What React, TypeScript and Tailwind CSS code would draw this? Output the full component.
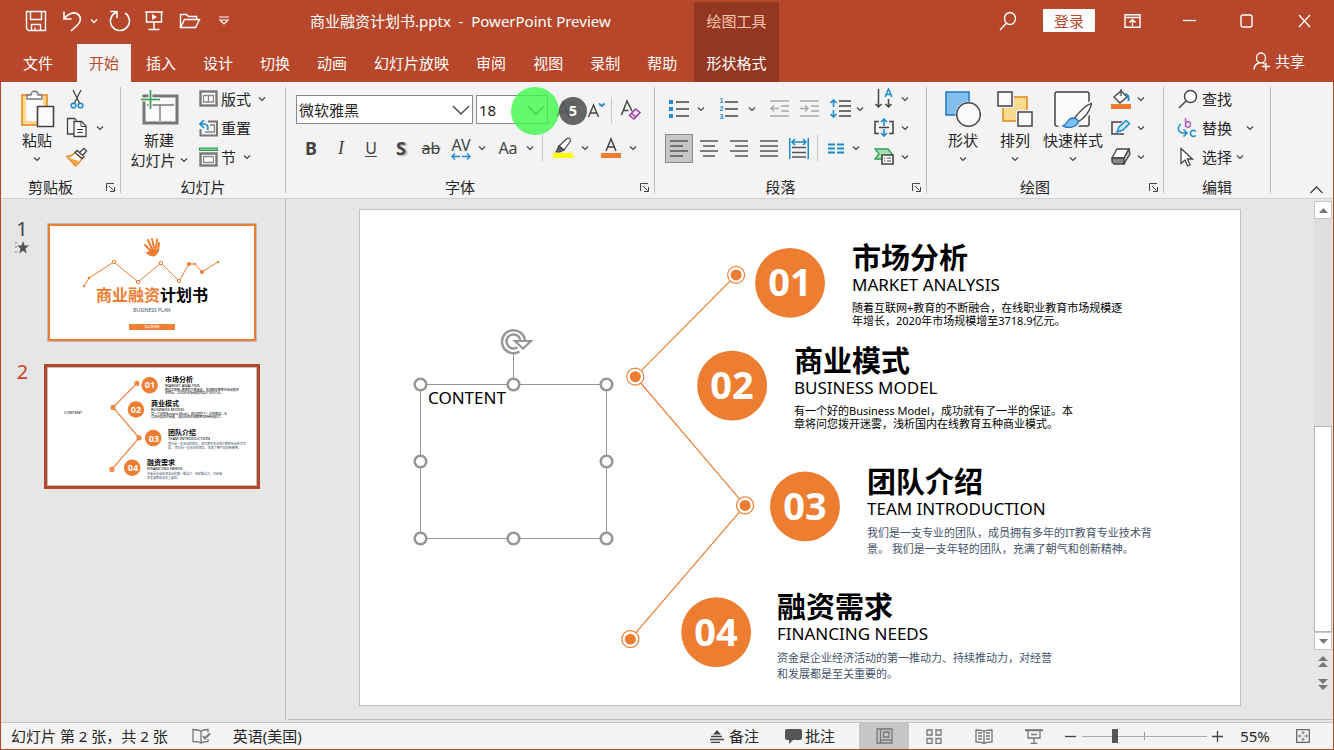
import { useState, type ReactNode } from 'react';
import clsx from 'clsx';

const INK = '#444444';
const BLUE = '#1e8bcd';
const ORANGE = '#ed7d31';

const TABS = ['开始', '插入', '设计', '切换', '动画', '幻灯片放映', '审阅', '视图', '录制', '帮助'];

interface Point { x: number; y: number }
interface Topic {
  no: string; title: string; sub: string; lines: string[];
  left: number; top: number; badge: Point; muted?: boolean;
}

// 坐标以 880x496 的幻灯片画布为准
const TOPICS: Topic[] = [
  {
    no: '01', title: '市场分析', sub: 'MARKET ANALYSIS', left: 492, top: 33, badge: { x: 430, y: 73 },
    lines: ['随着互联网+教育的不断融合，在线职业教育市场规模逐', '年增长，2020年市场规模增至3718.9亿元。'],
  },
  {
    no: '02', title: '商业模式', sub: 'BUSINESS MODEL', left: 434, top: 136, badge: { x: 372, y: 176 },
    lines: ['有一个好的Business Model，成功就有了一半的保证。本', '章将问您拨开迷雾，浅析国内在线教育五种商业模式。'],
  },
  {
    no: '03', title: '团队介绍', sub: 'TEAM INTRODUCTION', left: 507, top: 257, badge: { x: 445, y: 297 }, muted: true,
    lines: ['我们是一支专业的团队，成员拥有多年的IT教育专业技术背', '景。 我们是一支年轻的团队，充满了朝气和创新精神。'],
  },
  {
    no: '04', title: '融资需求', sub: 'FINANCING NEEDS', left: 417, top: 382, badge: { x: 356, y: 423 }, muted: true,
    lines: ['资金是企业经济活动的第一推动力、持续推动力，对经营', '和发展都是至关重要的。'],
  },
];
const NODES: Point[] = [{ x: 376, y: 65 }, { x: 275, y: 167 }, { x: 385, y: 296 }, { x: 270, y: 430 }];

/* ---------- 基础组件 ---------- */

function Svg({ w, h, children, stroke = INK, sw = 1.3 }: {
  w: number; h: number; children: ReactNode; stroke?: string; sw?: number;
}) {
  return (
    <svg className="shrink-0" width={w} height={h} viewBox={`0 0 ${w} ${h}`} fill="none" stroke={stroke} strokeWidth={sw} aria-hidden="true">
      {children}
    </svg>
  );
}

function Btn({ label, className, children }: { label: string; className?: string; children: ReactNode }) {
  return (
    <button type="button" aria-label={label} className={clsx('flex shrink-0 items-center justify-center', className)}>
      {children}
    </button>
  );
}

function Chevron() {
  return <Svg w={8} h={6} sw={1.2}><path d="M1 1.5l3 3 3-3" /></Svg>;
}

function Drop({ label, className }: { label: string; className?: string }) {
  return <Btn label={label} className={clsx('h-5 w-3', className)}><Chevron /></Btn>;
}

function Group({ title, width, launcher, children }: {
  title: string; width: string; launcher?: boolean; children: ReactNode;
}) {
  return (
    <>
      <section aria-label={title} className={clsx('flex shrink-0 flex-col pt-0.5', width)}>
        <div className="flex h-[87px]">{children}</div>
        <div className="mt-1.5 flex h-5 items-center">
          <span className="flex-1 text-center">{title}</span>
          {launcher && (
            <Btn label={`${title}设置`} className="w-5">
              <Svg w={9} h={9} sw={1}><path d="M.5 8V.5H8M3 3l4.5 4.5M8.5 4v4.5H4" /></Svg>
            </Btn>
          )}
        </div>
      </section>
      <div className="my-[5px] w-px shrink-0 bg-[#bdbdbd]" />
    </>
  );
}

/* ---------- 标题栏 ---------- */

function Header() {
  return (
    <header className="flex h-[81px] shrink-0 bg-[#b7472a] text-white">
      <div className="flex w-[693px] shrink-0 flex-col">
        <div className="flex h-[43px] items-center pb-1 pl-[21px]">
          <Btn label="保存" className="w-7">
            <Svg w={22} h={22} stroke="#fff" sw={1.4}><path d="M1.5 1.5h19v19h-17l-2-2zM5.5 1.5v8h11v-8M6.5 20.500v-6h9v6M10 20.500v-3" /></Svg>
          </Btn>
          <Btn label="撤消" className="ml-2 w-7">
            <Svg w={20} h={22} stroke="#fff" sw={1.6}><path d="M2 1.500v7.500h7.500M2.500 8.500C6 3.500 11.500 1.500 15.500 4s3.500 7.500.5 10.500L9 21" /></Svg>
          </Btn>
          <Btn label="撤消选项" className="w-4">
            <Svg w={8} h={6} stroke="#fff"><path d="M1 1.500l3 3 3-3" /></Svg>
          </Btn>
          <Btn label="重做" className="ml-1 w-7">
            <Svg w={22} h={22} stroke="#fff" sw={1.6}><path d="M1.500 1.500h6.500v6.500M7.500 2.200A9.500 9.500 0 1 0 16 3" /></Svg>
          </Btn>
          <Btn label="从头开始" className="ml-1.5 w-7">
            <Svg w={20} h={22} stroke="#fff" sw={1.500}><path d="M1 2h18M2.500 2v10h15V2M10 12v7M4.500 19.500h11" /><path d="M8 4l5 3-5 3z" fill="#fff" stroke="none" /></Svg>
          </Btn>
          <Btn label="打开" className="ml-2 w-7">
            <Svg w={22} h={18} stroke="#fff" sw={1.4}><path d="M1.500 15.500v-13h6l2 2h8v3M1.500 15.500l4-8h15l-4 8z" /></Svg>
          </Btn>
          <Btn label="自定义快速访问工具栏" className="ml-3 w-4">
            <Svg w={12} h={9} stroke="#fff" sw={1.2}><path d="M1 1h10M2 4l4 4 4-4z" /></Svg>
          </Btn>
          <span className="ml-[78px] whitespace-pre">商业融资计划书.pptx  -  PowerPoint Preview</span>
        </div>
        <nav className="flex flex-1 pl-2.5" aria-label="功能区">
          <button type="button" className="mr-3 px-3">文件</button>
          <div className="flex gap-[3px]">
            {TABS.map((t, i) => (
              <button key={t} type="button" className={clsx('px-3', i === 0 && 'bg-[#f3f3f3] text-[#b7472a]')}>{t}</button>
            ))}
          </div>
        </nav>
      </div>
      <div className="mt-px flex w-[85px] shrink-0 flex-col items-center bg-[#943722]">
        <span className="flex h-[42px] items-center pb-1 text-[#f5c3ae]">绘图工具</span>
        <button type="button" className="flex-1">形状格式</button>
      </div>
      <div className="flex flex-1 flex-col">
        <div className="flex h-[39px] items-center justify-end">
          <Btn label="搜索" className="w-8">
            <Svg w={18} h={20} stroke="#fff" sw={1.4}><ellipse cx="11" cy="7.500" rx="5.500" ry="6" /><path d="M7.500 12L1 19" /></Svg>
          </Btn>
          <button type="button" className="mr-[9px] ml-[19px] h-[23px] w-[52px] rounded-[1px] bg-white text-[#b7472a]">登录</button>
          <Btn label="功能区显示选项" className="w-[57px]">
            <Svg w={17} h={14} stroke="#fff" sw={1.4}><path d="M1 .7h15v12.500H1zM1 3.500h15M8.500 12V6M5.500 8.500l3-3 3 3" /></Svg>
          </Btn>
          <Btn label="最小化" className="w-[57px]"><Svg w={13} h={14} stroke="#fff"><path d="M0 6.500h13" /></Svg></Btn>
          <Btn label="最大化" className="w-[57px]"><Svg w={13} h={14} stroke="#fff" sw={1.4}><rect x="1" y="1" width="11" height="12" rx="2" /></Svg></Btn>
          <Btn label="关闭" className="w-[58px]"><Svg w={13} h={14} stroke="#fff"><path d="M1 1l11 12M12 1L1 13" /></Svg></Btn>
        </div>
        <div className="flex flex-1 items-center justify-end pr-7">
          <button type="button" className="flex items-center gap-1">
            <Svg w={18} h={19} stroke="#fff"><ellipse cx="8" cy="6" rx="4.500" ry="5" /><path d="M1 17.500c.3-3.500 2.500-6 5-6.500M10 11c1 .4 1.500 1 2 1.700M9 14.500h8M13 10.500v8" /></Svg>
            共享
          </button>
        </div>
      </div>
    </header>
  );
}

/* ---------- 功能区 ---------- */

function ClipboardGroup() {
  return (
    <Group title="剪贴板" width="w-[119px]" launcher>
      <button type="button" className="ml-1 flex w-16 flex-col items-center pt-1.5">
        <Svg w={36} h={38}>
          <path d="M3 5h25v30H3z" fill="#fbd98d" stroke="#e8851c" strokeWidth={1.5} />
          <path d="M7 8h17v23H7z" fill="#fafafa" stroke="none" />
          <path d="M8 9V5h4c0-5 7-5 7 0h4v4z" fill="#fff" stroke="#777" />
          <path d="M18.500 16.500h16v20h-16z" fill="#fafafa" strokeWidth={1.600} />
        </Svg>
        <span className="leading-6">粘贴</span>
        <span className="mt-1"><Chevron /></span>
      </button>
      <div className="flex flex-col">
        <Btn label="剪切" className="h-[29px] w-4">
          <Svg w={14} h={20}><path d="M3 1l6.500 13M11 1L4.500 14" /><circle cx="3.500" cy="16.500" r="2.300" stroke={BLUE} strokeWidth={1.600} /><circle cx="10.500" cy="16.500" r="2.300" stroke={BLUE} strokeWidth={1.600} /></Svg>
        </Btn>
        <Btn label="复制" className="h-[29px] w-4">
          <Svg w={22} h={21}><path d="M8 17H1.500V1.500h7l2 2" /><path d="M8 4.500h7.500L20 9v10.500H8z" fill="#fafafa" /><path d="M15 5v4.500h5M11 12.500h6M11 15.500h6" strokeWidth={1} /></Svg>
        </Btn>
        <Btn label="格式刷" className="h-[29px] w-4">
          <Svg w={22} h={20}><path d="M1 9.500c4 0 6-1.500 8-4l7 6c-1.500 3-3.500 5-6.500 7.500z" fill="#fff" stroke="#e8851c" strokeWidth={1.500} /><path d="M3 11l10 3-3.500 4z" fill="#f6a13a" stroke="none" /><path d="M9 5.500l2-2 7 6-2 2zM13.500 5.500L18 1.500l2.500 2.500L16.500 8.500" fill="#fff" /></Svg>
        </Btn>
      </div>
      <Drop label="复制选项" className="mt-[34px] ml-[9px]" />
    </Group>
  );
}

function SlidesGroup() {
  return (
    <Group title="幻灯片" width="w-[164px]">
      <div className="flex w-[76px] shrink-0 flex-col items-center pt-1.5">
        <button type="button" className="flex flex-col items-center">
          <Svg w={39} h={36}>
            <rect x="4" y="6" width="33" height="27" fill="#fafafa" stroke="#777" strokeWidth={3} />
            <path d="M7 15h27M20 15v16" stroke="#777" />
            <path d="M1 9.500h19M10.500 0v19" stroke="#f3f3f3" strokeWidth={4} />
            <path d="M1 9.500h19M10.500 0v19" stroke="#2f9e4f" strokeWidth={1.600} />
          </Svg>
          <span className="mt-1 leading-5">新建</span>
        </button>
        <button type="button" className="flex items-center gap-1 leading-5 whitespace-nowrap">幻灯片<Chevron /></button>
      </div>
      <div className="ml-0.5 flex flex-col">
        <button type="button" className="flex h-[29px] items-center gap-[3px]">
          <Svg w={19} h={17}><rect x="1.500" y="1.500" width="16" height="14" fill="#fff" stroke="#777" strokeWidth={2.400} /><path d="M4.500 5.500h10v6.500h-10zM9.500 5.500V12" stroke="#888" /></Svg>
          版式<span className="ml-1"><Chevron /></span>
        </button>
        <button type="button" className="flex h-[29px] items-center gap-[3px]">
          <Svg w={19} h={18}><path d="M9 2.500h9v14H1.500V10" stroke="#777" strokeWidth={2} /><path d="M11 6h4.500v7H6" stroke="#888" /><path d="M5 1L1 5l4 4M1 5h3.500c4 0 5 3 4 6" stroke={BLUE} strokeWidth={1.700} /></Svg>
          重置
        </button>
        <button type="button" className="flex h-[29px] items-center gap-[3px]">
          <Svg w={19} h={20}><rect x=".5" y="1" width="18" height="2.500" fill="#7fcf95" stroke="#2f9e4f" strokeWidth={1} /><rect x="1.500" y="6.500" width="16" height="12" fill="#fff" stroke="#777" strokeWidth={2.400} /><path d="M4.500 9.500h10v6h-10z" stroke="#888" /></Svg>
          节<span className="ml-1"><Chevron /></span>
        </button>
      </div>
    </Group>
  );
}

function FontSelect({ label, value, options, width }: { label: string; value: string; options: string[]; width: string }) {
  return (
    <div className={clsx('relative h-[29px] shrink-0', width)}>
      <select aria-label={label} defaultValue={value} className="h-full w-full appearance-none border border-[#8a8a8a] bg-white pl-0.5 outline-none">
        {options.map((o) => <option key={o}>{o}</option>)}
      </select>
      <span className="pointer-events-none absolute inset-y-0 right-[3px] flex items-center">
        <Svg w={18} h={10} sw={1.4}><path d="M1 1l8 8 8-8" /></Svg>
      </span>
    </div>
  );
}

function FontGroup() {
  return (
    <Group title="字体" width="w-[368px]" launcher>
      <div className="flex flex-col pt-[11px] pl-2.5">
        <div className="relative flex items-center gap-[3px]">
          <FontSelect label="字体" value="微软雅黑" options={['微软雅黑', '宋体', '黑体']} width="w-[177px]" />
          <FontSelect label="字号" value="18" options={['12', '16', '18', '24']} width="w-[72px]" />
          <Btn label="增大字号" className="ml-1 w-6">
            <Svg w={22} h={20} sw={1.5}><path d="M1 17L7 2l6 15M3 12h8" /><path d="M13 5l3-3 3 3" stroke={BLUE} /></Svg>
          </Btn>
          <Btn label="减小字号" className="ml-1 w-5">
            <Svg w={19} h={18} sw={1.4}><path d="M1.500 16L6.500 4l5 12M3.500 12h6.500" /><path d="M12 2.500l2.800 2.500 2.800-2.500" stroke={BLUE} strokeWidth={1.700} /></Svg>
          </Btn>
          <div className="ml-0.5 h-[26px] w-px bg-[#c8c8c8]" />
          <Btn label="清除所有格式" className="ml-1 w-6">
            <Svg w={22} h={22} sw={1.5}><path d="M1.500 16L7 2l5 10M3.500 11.500h5" /><path d="M9.500 16.500l6-6.500 4.500 3.500-6 6.500z" fill="#f8eefa" stroke="#9a3ba6" /><path d="M11.500 14.500l4.500 3.500" stroke="#9a3ba6" /></Svg>
          </Btn>
          {/* 点击提示 */}
          <span className="pointer-events-none absolute top-[-8px] left-[215px] size-12 rounded-full bg-[#3df74a]/80" />
          <span className="pointer-events-none absolute top-0.5 left-[263px] flex size-7 items-center justify-center rounded-full bg-[#555555]/90 text-sm font-bold text-white">5</span>
        </div>
        <div className="mt-2 flex h-8 items-center text-[#444]">
          <Btn label="加粗" className="w-[30px] text-lg font-bold">B</Btn>
          <Btn label="倾斜" className="w-[30px] font-['Liberation_Serif',serif] text-lg italic">I</Btn>
          <Btn label="下划线" className="w-[30px] text-base underline underline-offset-2">U</Btn>
          <Btn label="文字阴影" className="w-[30px] text-lg font-bold text-shadow-[2px_1px_1px_#aaaaaa]">S</Btn>
          <Btn label="删除线" className="w-[30px] text-base line-through">ab</Btn>
          <Btn label="字符间距" className="w-[30px] flex-col text-base leading-4">
            AV
            <Svg w={20} h={7} stroke={BLUE} sw={1.4}><path d="M1 3.500h8M4 .5l-3 3 3 3M11 3.500h8M16 .5l3 3-3 3" /></Svg>
          </Btn>
          <Drop label="字符间距选项" />
          <Btn label="更改大小写" className="ml-1 w-8 text-base">Aa</Btn>
          <Drop label="大小写选项" />
          <div className="ml-1.5 h-7 w-px bg-[#c8c8c8]" />
          <Btn label="突出显示颜色" className="ml-2 w-6">
            <Svg w={20} h={22} sw={1.2}><path d="M6 9l8-7.500c2-1 4 .5 3.500 2.500L11 13z" fill="#fff" /><path d="M6 9l5 4-4 2H3z" fill="#666" /><path d="M0 16h20v5H0z" fill="#ffff00" stroke="none" /></Svg>
          </Btn>
          <Drop label="突出显示选项" className="ml-1" />
          <Btn label="字体颜色" className="ml-2 w-6">
            <Svg w={20} h={22} sw={1.5}><path d="M5 14l5-12 5 12M7 10h6" /><path d="M0 16h20v5H0z" fill={ORANGE} stroke="none" /></Svg>
          </Btn>
          <Drop label="字体颜色选项" className="ml-1" />
        </div>
      </div>
    </Group>
  );
}

const ALIGNS = [
  { label: '左对齐', d: 'M0 1h18M0 6h13M0 11h18M0 16h13' },
  { label: '居中', d: 'M0 1h18M3 6h12M0 11h18M3 16h12' },
  { label: '右对齐', d: 'M0 1h18M5 6h13M0 11h18M5 16h13' },
  { label: '两端对齐', d: 'M0 1h18M0 6h18M0 11h18M0 16h18' },
];

function ParagraphGroup() {
  const [align, setAlign] = useState(0);
  return (
    <Group title="段落" width="w-[271px]" launcher>
      <div className="flex w-[214px] flex-col pt-[9px] pl-2.5">
        <div className="flex h-[31px] items-center">
          <Btn label="项目符号" className="w-7">
            <Svg w={20} h={20} sw={1.6}><path d="M7 3h13M7 10h13M7 17h13" /><path d="M0 1h4v4H0zM0 8h4v4H0zM0 15h4v4H0z" fill={BLUE} stroke="none" /></Svg>
          </Btn>
          <Drop label="项目符号选项" className="ml-0.5" />
          <Btn label="编号" className="ml-2 w-7">
            <span className="mr-0.5 flex flex-col font-['Liberation_Sans',sans-serif] text-[7px] leading-[8px] font-bold text-[#1e8bcd]"><span>1</span><span>2</span><span>3</span></span>
            <Svg w={13} h={20} sw={1.6}><path d="M0 3h13M0 10h13M0 17h13" /></Svg>
          </Btn>
          <Drop label="编号选项" className="ml-[3px]" />
          <Btn label="减少缩进量" className="ml-1.5 w-[30px]">
            <Svg w={19} h={18} stroke="#aaaaaa" sw={1.5}><path d="M0 1h19M11 6h8M11 11h8M0 16h19M1 8.500h8M4 5.500l-3 3 3 3" /></Svg>
          </Btn>
          <Btn label="增加缩进量" className="w-[30px]">
            <Svg w={19} h={18} stroke="#aaaaaa" sw={1.5}><path d="M0 1h19M11 6h8M11 11h8M0 16h19M0 8.500h8M5 5.500l3 3-3 3" /></Svg>
          </Btn>
          <Btn label="行距" className="ml-0.5 w-7">
            <Svg w={21} h={19} sw={1.6}><path d="M9 2h12M9 7h12M9 12h12M9 17h12" /><path d="M3.500 8V1M.5 4l3-3 3 3M3.500 11v7M.5 15l3 3 3-3" stroke={BLUE} /></Svg>
          </Btn>
          <Drop label="行距选项" />
        </div>
        <div className="mt-[9px] flex h-[30px] items-center">
          {ALIGNS.map((a, i) => (
            <button
              key={a.label}
              type="button"
              aria-label={a.label}
              aria-pressed={align === i}
              onClick={() => setAlign(i)}
              className={clsx('mr-0.5 flex h-[29px] w-7 items-center justify-center border', align === i ? 'border-[#8a8a8a] bg-[#c6c6c6]' : 'border-transparent')}
            >
              <Svg w={18} h={17} stroke="#555" sw={1.6}><path d={a.d} /></Svg>
            </button>
          ))}
          <Btn label="分散对齐" className="w-7">
            <Svg w={20} h={21} sw={1.6}><path d="M3 9.500h14M3 14.500h14M3 19h14" stroke="#555" /><path d="M.7 0v21M19.300 0v21M3 4h14M6 1L3 4l3 3M14 1l3 3-3 3" stroke={BLUE} /></Svg>
          </Btn>
          <div className="ml-1 h-7 w-px bg-[#c8c8c8]" />
          <Btn label="分栏" className="ml-1 w-7">
            <Svg w={16} h={11} stroke={BLUE} sw={1.8}><path d="M0 1.500h7M9 1.500h7M0 5.500h7M9 5.500h7M0 9.500h7M9 9.500h7" /></Svg>
          </Btn>
          <Drop label="分栏选项" />
        </div>
      </div>
      <div className="flex flex-col">
        <div className="flex h-[29px] items-center">
          <Btn label="文字方向" className="w-[30px]"><Svg w={20} h={21} sw={1.5}><path d="M4.500 1v18M1.500 16l3 3 3-3M14.500 11v8M11.500 16l3 3 3-3" /><path d="M11 9l3.500-8L18 9M12 6.500h5" stroke={BLUE} /></Svg></Btn>
          <Drop label="文字方向选项" />
        </div>
        <div className="flex h-[29px] items-center">
          <Btn label="对齐文本" className="w-[30px]"><Svg w={20} h={19} sw={1.6}><path d="M5 3.500H1v12h4M15 3.500h4v12h-4M5 9.500h10" /><path d="M10 8V1M7 4l3-3 3 3M10 11v7M7 15l3 3 3-3" stroke={BLUE} /></Svg></Btn>
          <Drop label="对齐文本选项" />
        </div>
        <div className="flex h-[29px] items-center">
          <Btn label="转换为 SmartArt" className="w-[30px]"><Svg w={20} h={17}><path d="M1 1h13l4 5-4 5H1l4-5z" fill="#a5dfb4" stroke="#2f9e4f" /><path d="M8 7h11v9H8z" fill="#fff" strokeWidth={1.600} /><path d="M10 10h1.500M13 10h4M10 13h1.500M13 13h4" strokeWidth={1} /></Svg></Btn>
          <Drop label="SmartArt 选项" />
        </div>
      </div>
    </Group>
  );
}

function BigButton({ label, width, icon }: { label: string; width: string; icon: ReactNode }) {
  return (
    <button type="button" className={clsx('flex shrink-0 flex-col items-center pt-1.5 whitespace-nowrap', width)}>
      {icon}
      <span className="leading-6">{label}</span>
      <span className="mt-1"><Chevron /></span>
    </button>
  );
}

const BRUSH = 'M38 13c-6 2-13 9-18 16l4 3c7-4 12-12 14-19z';
const BRUSH_TIP = 'M9 36c4-1 4-7 9-8 4 0 7 2 6 5-2 4-10 6-15 3z';

function DrawingGroup() {
  return (
    <Group title="绘图" width="w-[236px]" launcher>
      <BigButton
        label="形状"
        width="ml-2.5 w-[52px]"
        icon={<Svg w={36} h={38}><path d="M1 2h23v23H1z" fill="#83bfee" stroke="#1f78c1" strokeWidth={1.5} /><circle cx="23.500" cy="24.500" r="13" fill="#f3f3f3" stroke="none" /><circle cx="23.500" cy="24.500" r="11.800" fill="#fafafa" strokeWidth={1.5} /></Svg>}
      />
      <BigButton
        label="排列"
        width="w-[52px]"
        icon={<Svg w={36} h={38}><path d="M6 7h24v24H6z" fill="#f9db8f" stroke="#e8851c" strokeWidth={1.5} /><path d="M-1 0h18v18H-1zM19 20h18v18H19z" fill="#f3f3f3" stroke="none" /><path d="M1 2h14v14H1zM21 22h14v14H21z" fill="#fafafa" strokeWidth={1.5} /></Svg>}
      />
      <BigButton
        label="快速样式"
        width="w-16"
        icon={(
          <Svg w={38} h={38}>
            <rect x="1" y="2" width="34" height="34" rx="2" fill="#fafafa" strokeWidth={1.5} />
            <path d={`${BRUSH}${BRUSH_TIP}`} stroke="#f5f5f5" strokeWidth={5} />
            <path d={BRUSH} fill="#fff" />
            <path d={BRUSH_TIP} fill="#83bfee" stroke="#1f78c1" />
          </Svg>
        )}
      />
      <div className="ml-0.5 flex flex-col">
        <div className="flex h-[29px] items-center">
          <Btn label="形状填充" className="w-7"><Svg w={20} h={20}><path d="M3 8l7-6 6 6-7 6z" fill="#fff" /><path d="M10 0v7" /><path d="M14 5c3 0 4 3 3.500 7" stroke={BLUE} strokeWidth={2} /><path d="M0 15h20v5H0z" fill={ORANGE} stroke="none" /></Svg></Btn>
          <Drop label="形状填充选项" />
        </div>
        <div className="flex h-[29px] items-center">
          <Btn label="形状轮廓" className="w-7"><Svg w={20} h={18}><path d="M11 3H1v12h12" strokeWidth={1.5} /><path d="M6 13l2-5 7-6.500 3.500 3L12 11z" fill="#cfe6f8" stroke={BLUE} strokeWidth={1.5} /></Svg></Btn>
          <Drop label="形状轮廓选项" />
        </div>
        <div className="flex h-[29px] items-center">
          <Btn label="形状效果" className="w-7"><Svg w={20} h={17}><path d="M1 10l5-9h12l-5 9z" fill="#fff" /><path d="M1 10h12v6H3l-2-2z" fill="#888" /><path d="M13 10l5-9 1 5-6 10z" fill="#bbb" /></Svg></Btn>
          <Drop label="形状效果选项" />
        </div>
      </div>
    </Group>
  );
}

function EditingGroup() {
  return (
    <Group title="编辑" width="w-[106px]">
      <div className="flex flex-col pl-[13px]">
        <button type="button" className="flex h-[29px] items-center gap-1">
          <Svg w={21} h={20}><circle cx="13.500" cy="7.500" r="6" fill="#fff" strokeWidth={1.5} /><path d="M9 12l-7 7" strokeWidth={1.5} /></Svg>
          查找
        </button>
        <button type="button" className="flex h-[29px] items-center gap-1">
          <Svg w={21} h={20} sw={1.5}>
            <path d="M8.500 0v9M8.500 6.500a2.500 2.700 0 1 0 5 0 2.500 2.700 0 1 0-5 0" stroke="#b35fc0" />
            <path d="M19 13.500c-4-3-6 .5-5.500 2.500s3 3.500 5.500 1.500M4 6c-4 3-3.500 8 1 9h4M6.500 11.500L10 15l-3.500 3.500" stroke={BLUE} />
          </Svg>
          替换<span className="ml-2.5"><Chevron /></span>
        </button>
        <button type="button" className="flex h-[29px] items-center gap-1">
          <Svg w={21} h={20}><path d="M4 1.500v15l4-3.500 2.500 6 2.500-1-2.500-6h5z" fill="#fff" /></Svg>
          选择<Chevron />
        </button>
      </div>
    </Group>
  );
}

function Ribbon() {
  return (
    <div className="flex h-[117px] shrink-0 border-b border-[#d0d0d0] bg-[#f3f3f3]">
      <ClipboardGroup />
      <SlidesGroup />
      <FontGroup />
      <ParagraphGroup />
      <DrawingGroup />
      <EditingGroup />
      <div className="flex flex-1 items-end justify-end pr-2.5 pb-1">
        <Btn label="折叠功能区"><Svg w={13} h={8}><path d="M.5 7l6-6 6 6" /></Svg></Btn>
      </div>
    </div>
  );
}

/* ---------- 幻灯片 ---------- */

function ContentSlide({ k = 1 }: { k?: number }) {
  const mini = k < 1;
  return (
    <>
      <svg className="absolute inset-0 size-full" viewBox="0 0 880 496" fill="none" stroke={ORANGE} strokeWidth={mini ? 5 : 1.2} aria-hidden="true">
        <polyline points={NODES.map((n) => `${n.x},${n.y}`).join(' ')} />
        {NODES.map((n) => (
          <g key={n.y}>
            <circle cx={n.x} cy={n.y} r="8.500" fill="#fff" />
            <circle cx={n.x} cy={n.y} r="5.500" fill={ORANGE} stroke="none" />
          </g>
        ))}
        {TOPICS.map((t) => <circle key={t.no} cx={t.badge.x} cy={t.badge.y} r="35" fill={ORANGE} stroke="none" />)}
      </svg>
      {TOPICS.map((t) => (
        <div key={t.no} className="text-black">
          <span
            className={clsx('absolute flex -translate-1/2 items-center justify-center font-bold text-white', mini ? 'text-[9px] leading-3' : 'pb-1 text-[38px] leading-10')}
            style={{ left: Math.round(t.badge.x * k), top: Math.round(t.badge.y * k) }}
          >
            {t.no}
          </span>
          <div className="absolute whitespace-nowrap" style={{ left: Math.round(t.left * k), top: Math.round(t.top * k) }}>
            <h2 className={clsx('font-bold', mini ? 'text-[7px] leading-[7px]' : 'text-[29px] leading-[30px]')}>{t.title}</h2>
            <p className={mini ? 'text-[4px] leading-[5px]' : 'text-[17px] leading-6'}>{t.sub}</p>
            <div
              className={clsx(
                t.muted && 'text-[#44546a]',
                mini ? 'mt-px text-[3px]' : 'mt-1 text-[11px]',
                mini ? (t.muted ? 'leading-[4px]' : 'leading-[3px]') : (t.muted ? 'leading-4' : 'leading-[13px]'),
              )}
            >
              {t.lines.map((l) => <p key={l}>{l}</p>)}
            </div>
          </div>
        </div>
      ))}
      <span
        className={clsx('absolute text-black', mini ? 'text-[4px] leading-[6px]' : 'text-[17px] leading-6')}
        style={{ left: Math.round(68 * k), top: Math.round(176 * k) }}
      >
        CONTENT
      </span>
    </>
  );
}

function Selection() {
  const handles = [[0, 0], [93, 0], [186, 0], [0, 77], [186, 77], [0, 154], [93, 154], [186, 154]];
  return (
    <svg className="absolute top-[114px] left-[49px]" width="208" height="226" viewBox="-11 -60 208 226" fill="none" stroke="#969696" strokeWidth="1" aria-hidden="true">
      <path d="M.5.500h186v154H.5zM93.500 0v-31" />
      {handles.map(([x, y]) => <circle key={`${x}-${y}`} cx={x + 0.5} cy={y + 0.5} r="5.800" fill="#fff" strokeWidth="2.500" />)}
      <path d="M99.500-32.500A11.500 11.500 0 1 1 105-43M97.500-36.800A7 7 0 1 1 100.500-43" strokeWidth="2.500" />
      <path d="M95-43h16l-8 7.500z" fill="#fff" strokeWidth="2.200" />
    </svg>
  );
}

function CoverThumb() {
  return (
    <div className="relative h-[119px] w-[210px] shrink-0 border border-[#bfbfbf] bg-white">
      <div className="absolute inset-0 border-2 border-[#ed7d31]" />
      <svg className="absolute inset-0" width="208" height="117" viewBox="48 224 208 117" fill="none" stroke={ORANGE} aria-hidden="true">
        <polyline points="84,286 89,278 114,262 138,282 161,263 179,281 189,264 195,264 202,272 218,262" />
        <g fill="#fff">
          <circle cx="114" cy="262" r="1.700" /><circle cx="138" cy="282" r="1.700" /><circle cx="161" cy="263" r="1.700" /><circle cx="179" cy="281" r="1.700" />
        </g>
        <g fill={ORANGE} stroke="none">
          <circle cx="84" cy="286" r="1.200" /><circle cx="89" cy="278" r="1.200" /><circle cx="189" cy="264" r="2" /><circle cx="195" cy="264" r="1.200" /><circle cx="202" cy="272" r="2" /><circle cx="218" cy="262" r="1.200" />
        </g>
        <path d="M145 252.500c2 0 4-2 6-3 3-1 6 0 8 0-1 4-3 7-6 7s-5-2-8-4z" fill={ORANGE} stroke="none" />
        <path d="M150 250l-5-5M152 249l-4-9M154 248l-2-9M156 248l1-8.500M158 251l1-8" strokeWidth="2" strokeLinecap="round" />
      </svg>
      <div className="relative flex flex-col items-center pt-[61px] text-black">
        <p className="text-base leading-5 font-bold whitespace-nowrap"><span className="text-[#ed7d31]">商业融资</span>计划书</p>
        <p className="mt-0.5 text-[5px] leading-[6px] text-[#44546a]">BUSINESS PLAN</p>
        <p className="mt-[11px] h-1.5 w-[46px] rounded-[1px] bg-[#ed7d31] text-center text-[3px] leading-[6px] text-white">互动教育网</p>
      </div>
    </div>
  );
}

function Sidebar() {
  return (
    <aside className="flex w-[285px] shrink-0 flex-col border-r border-[#bfbfbf] pt-5">
      <div className="flex">
        <div className="flex w-[46px] flex-col items-center gap-0.5 pr-1 text-xl leading-5 text-[#444]">
          1
          <Svg w={14} h={13}><path d="M8 0l1.600 4.500H14l-3.500 3 1.300 5L8 9.700 4.200 12.500l1.300-5L2 4.500h4.400z" fill="#555" stroke="none" /><path d="M0 2h2M0 6h2M0 11h2" stroke="#777" strokeWidth={1} /></Svg>
        </div>
        <div className="mt-1"><CoverThumb /></div>
      </div>
      <div className="mt-5 flex">
        <div className="flex w-[43px] justify-center text-xl leading-5 text-[#c8472c]">2</div>
        <div className="mt-0.5 shrink-0 border-[3px] border-[#b7472a]">
          <div className="relative h-[119px] w-[210px] overflow-hidden border border-[#bfbfbf] bg-white">
            <ContentSlide k={0.2375} />
          </div>
        </div>
      </div>
    </aside>
  );
}

function Scrollbar() {
  const arrow = (d: string, label: string) => (
    <Btn label={label} className="h-[18px] w-[18px] border border-[#c6c6c6] bg-white">
      <Svg w={9} h={5}><path d={d} fill="#777" stroke="none" /></Svg>
    </Btn>
  );
  return (
    <div className="flex w-[19px] shrink-0 flex-col pt-0.5 pb-[29px]">
      {arrow('M0 5l4.500-5L9 5z', '向上滚动')}
      <div className="flex w-[18px] flex-1 flex-col justify-end bg-[#dfdfdf]">
        <div className="h-1/2 border border-[#b5b5b5] bg-white" />
      </div>
      {arrow('M0 0h9L4.500 5z', '向下滚动')}
      <Btn label="上一张幻灯片" className="mt-1.5 w-[18px]"><Svg w={10} h={11}><path d="M0 5l5-5 5 5zM0 11l5-5 5 5z" fill="#777" stroke="none" /></Svg></Btn>
      <Btn label="下一张幻灯片" className="mt-3 w-[18px]"><Svg w={10} h={11}><path d="M0 0h10L5 5zM0 6h10l-5 5z" fill="#777" stroke="none" /></Svg></Btn>
    </div>
  );
}

/* ---------- 状态栏 ---------- */

function StatusBar() {
  return (
    <footer className="flex h-[27px] shrink-0 items-stretch border-t border-[#c6c6c6] bg-[#f3f3f3]">
      <div className="flex flex-1 items-center pl-2.5">
        <span>幻灯片 第 2 张，共 2 张</span>
        <Btn label="拼写检查" className="ml-6">
          <Svg w={19} h={16} stroke="#777"><path d="M9 3.500C7 1.500 4 1.500 1 1.500v12c3 0 6 0 8 1.500zM9 3.500c1.500-1.500 4-2 7-2v3M16 11v2.500c-3 0-5 0-7 1.500" /><path d="M11 8l2 2.500L18 5.500" strokeWidth={2} /></Svg>
        </Btn>
        <span className="ml-[22px]">英语(美国)</span>
      </div>
      <button type="button" className="mr-[26px] flex items-center gap-[5px]">
        <Svg w={14} h={13}><path d="M3 4.500l4-4.500 4 4.500z" fill={INK} stroke="none" /><path d="M1 6.500h11M0 9.500h14M1 12.300h9" /></Svg>
        备注
      </button>
      <button type="button" className="mr-6 flex items-center gap-0.5">
        <Svg w={18} h={16}><path d="M2 1h13a2 2 0 0 1 2 2v7a2 2 0 0 1-2 2H8l-4 4v-4H2a2 2 0 0 1-2-2V3a2 2 0 0 1 2-2z" fill="#555" stroke="none" /></Svg>
        批注
      </button>
      <Btn label="普通视图" className="w-[50px] bg-[#c6c6c6]"><Svg w={17} h={16} stroke="#777"><path d="M1 1h15v14H1zM4.500 1v14M7.500 4h5.500v5H7.500zM4.500 12h11" /></Svg></Btn>
      <Btn label="幻灯片浏览" className="w-[50px]"><Svg w={16} h={15} stroke="#777"><path d="M1 1h5v5H1zM10 1h5v5h-5zM1 9.500h5v5H1zM10 9.500h5v5h-5z" /></Svg></Btn>
      <Btn label="阅读视图" className="w-[50px]"><Svg w={18} h={15} stroke="#777"><path d="M9 2.500C7 1 4 1 1 1v12c3 0 6 0 8 1.500 2-1.500 5-1.500 8-1.500V1c-3 0-6 0-8 1.500zM9 2.500V14M3 4h4M3 7h4M3 10h4M11 4h4M11 7h4M11 10h4" /></Svg></Btn>
      <Btn label="幻灯片放映" className="w-[50px]"><Svg w={18} h={15} stroke="#777"><path d="M0 1.200h18" strokeWidth={2} /><path d="M3 2v7h12V2M6 5.500h6M9 9v5M5.500 14.300h7" /></Svg></Btn>
      <Btn label="缩小" className="ml-px w-5"><Svg w={11} h={11}><path d="M0 5.500h11" /></Svg></Btn>
      <div className="ml-0.5 flex items-center bg-[linear-gradient(#999,#999)] bg-[length:1px_8px] bg-center bg-no-repeat">
        <input
          type="range"
          aria-label="缩放"
          min={0}
          max={100}
          defaultValue={25}
          className="h-4 w-[125px] appearance-none bg-[linear-gradient(#aaa,#aaa)] bg-[length:100%_1px] bg-center bg-no-repeat [&::-webkit-slider-thumb]:h-3.5 [&::-webkit-slider-thumb]:w-1.5 [&::-webkit-slider-thumb]:appearance-none [&::-webkit-slider-thumb]:bg-[#555]"
        />
      </div>
      <Btn label="放大" className="w-5"><Svg w={11} h={11}><path d="M0 5.500h11M5.500 0v11" /></Svg></Btn>
      <button type="button" className="ml-3 w-8">55%</button>
      <Btn label="适应窗口" className="mr-4 ml-[18px] w-7"><Svg w={14} h={14} stroke="#666"><path d="M.7.700h12.600v12.600H.7z" /><path d="M7 3v2.500M7 11V8.500M3 7h2.500M11 7H8.500M5.500 4L7 2.500 8.500 4M5.500 10L7 11.500 8.500 10M4 5.500L2.500 7 4 8.500M10 5.500L11.500 7 10 8.500" strokeWidth={1} /></Svg></Btn>
    </footer>
  );
}

export default function App() {
  return (
    <div className="flex h-screen flex-col border border-[#b7472a] bg-[#e6e6e6] font-['Noto_Sans','Noto_Sans_CJK_SC',sans-serif] text-[15px] leading-5 text-[#262626]">
      <Header />
      <Ribbon />
      <div className="flex min-h-0 flex-1 pb-0.5">
        <Sidebar />
        <main className="ml-0.5 flex min-w-0 flex-1 border-b border-[#bfbfbf]">
          <div className="flex min-w-0 flex-1 items-center justify-center pr-0.5 pb-[3px]">
            <div className="relative h-[497px] w-[882px] shrink-0 border border-[#c0c0c0] bg-white">
              <ContentSlide />
              <Selection />
            </div>
          </div>
          <Scrollbar />
        </main>
      </div>
      <StatusBar />
    </div>
  );
}
